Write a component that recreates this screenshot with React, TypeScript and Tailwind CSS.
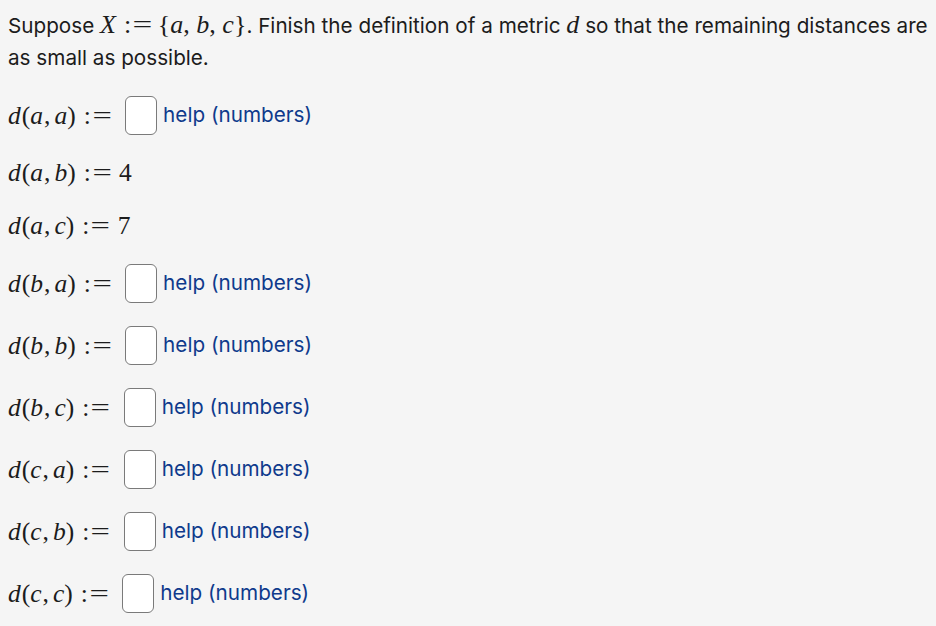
import React from "react"

const mathFont = { fontFamily: '"Liberation Serif", "Times New Roman", serif' }

function V({ children }: { children: React.ReactNode }): React.JSX.Element {
  return <span className="italic">{children}</span>
}

function Assign(): React.JSX.Element {
  return (
    <span className="ml-[8px] mr-[8px] inline-flex items-center not-italic">
      :<span className="ml-[4px] inline-block scale-x-[1.35]">=</span>
    </span>
  )
}

function Dist({ p, q }: { p: string; q: string }): React.JSX.Element {
  return (
    <span className="whitespace-nowrap text-[25.5px] leading-[31px]" style={mathFont}>
      <V>d</V>
      <span className="ml-[1px]">(</span>
      <V>{p}</V>
      <span className="ml-[1px]">,</span>
      <span className="ml-[4px]" />
      <V>{q}</V>
      <span>)</span>
      <Assign />
    </span>
  )
}

type Row = { p: string; q: string; value?: string }

const rows: Row[] = [
  { p: "a", q: "a" },
  { p: "a", q: "b", value: "4" },
  { p: "a", q: "c", value: "7" },
  { p: "b", q: "a" },
  { p: "b", q: "b" },
  { p: "b", q: "c" },
  { p: "c", q: "a" },
  { p: "c", q: "b" },
  { p: "c", q: "c" },
]

export default function App(): React.JSX.Element {
  return (
    <div
      className="min-h-screen bg-[#f5f5f5] px-2 pt-[9px] text-[#1c1c1c]"
      style={{ fontFamily: 'Inter, "Liberation Sans", Arial, sans-serif' }}
    >
      <p className="text-[20.7px] leading-[32px]">
        <span className="block whitespace-nowrap">
          Suppose{" "}
          <span className="text-[26px]" style={mathFont}>
            <V>X</V>
            <Assign />
            {"{"}
            <V>a</V>, <V>b</V>, <V>c</V>
            {"}"}
          </span>
          . Finish the definition of a metric{" "}
          <span className="text-[26px]" style={mathFont}>
            <V>d</V>
          </span>{" "}
          so that the remaining distances are
        </span>
        <span className="block">as small as possible.</span>
      </p>

      <div className="mt-[21px] flex flex-col gap-[22px]">
        {rows.map((r) =>
          r.value ? (
            <div key={r.p + r.q} className="flex h-[31px] items-center">
              <Dist p={r.p} q={r.q} />
              <span className="ml-[2px] text-[25.5px] leading-[31px]" style={mathFont}>
                {r.value}
              </span>
            </div>
          ) : (
            <div key={r.p + r.q} className="flex h-[40px] items-center">
              <Dist p={r.p} q={r.q} />
              <span className="ml-[8px] h-[39px] w-[32px] rounded-[6px] border border-[#7a7a7a] bg-white" />
              <a href="#" className="ml-[6px] text-[20.7px] text-[#0f3a8c]">
                help (numbers)
              </a>
            </div>
          )
        )}
      </div>
    </div>
  )
}
